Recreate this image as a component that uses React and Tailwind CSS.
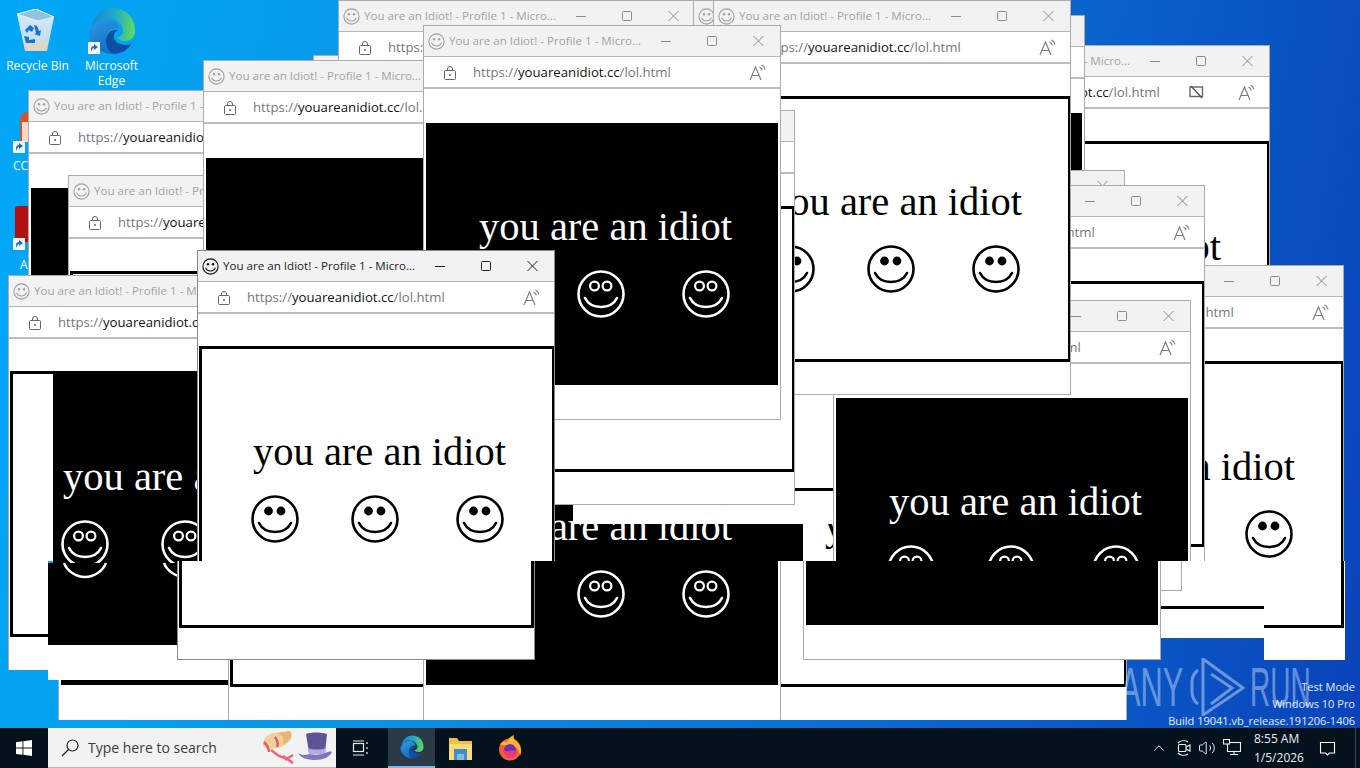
import { ChevronUp, Volume2 } from "lucide-react";

const uiFont = "font-['Open_Sans','Noto_Sans',sans-serif]";

// bottom to top; pos holds the window's place, the clip height where it is cut short
const lowerWindows = [
  { pos: "left-[313px] top-[55px]", clip: "h-[395px]" },
  { pos: "left-[58px] top-[325px]", clip: "h-[395px]", dark: true },
  { pos: "left-[228px] top-[325px]", clip: "h-[395px]" },
  { pos: "left-[769px] top-[325px]", clip: "h-[395px]" },
  { pos: "left-[423px] top-[325px]", clip: "h-[395px]", dark: true },
  { pos: "left-[28px] top-[90px]", clip: "h-[395px]", dark: true },
  { pos: "left-[68px] top-[175px]", clip: "h-[395px]" },
  { pos: "left-[338px] top-0", clip: "h-[395px]" },
  { pos: "left-[203px] top-[60px]", clip: "h-[395px]", dark: true },
  { pos: "left-[8px] top-[275px]", clip: "h-[286px]" },
];

const rightWindows = [
  { pos: "left-[912px] top-[45px]", clip: "h-[395px]", cam: true },
  { pos: "left-[727px] top-[15px]", clip: "h-[395px]", dark: true },
  { pos: "left-[767px] top-[170px]", clip: "h-[60px]" },
  { pos: "left-[986px] top-[265px]", clip: "h-[296px]" },
  { pos: "left-[847px] top-[185px]", clip: "h-[376px]" },
  { pos: "left-[485px] top-[129px]", clip: "h-[376px]" },
  { pos: "left-[833px] top-[300px]", clip: "h-[261px]", dark: true },
  { pos: "left-[693px] top-0", clip: "h-[395px]" },
  { pos: "left-[713px] top-0", clip: "h-[395px]", closed: true },
  { pos: "left-[437px] top-[110px]", clip: "h-[395px]", closed: true },
  { pos: "left-[423px] top-[25px]", clip: "h-[395px]", dark: true, closed: true },
];

function Smiley({ dark, size = 48 }) {
  const ink = dark ? "#fff" : "#000";
  return (
    <svg width={size} height={size} viewBox="0 0 48 48" className="shrink-0">
      <circle cx="24" cy="24" r="22.5" fill="none" stroke={ink} strokeWidth="2.6" />
      {dark ? (
        <>
          <circle cx="17.500" cy="16" r="4.400" fill="none" stroke={ink} strokeWidth="2.200" />
          <circle cx="30" cy="16" r="4.400" fill="none" stroke={ink} strokeWidth="2.200" />
        </>
      ) : (
        <>
          <circle cx="17.500" cy="16" r="4.400" fill={ink} />
          <circle cx="30" cy="16" r="4.400" fill={ink} />
        </>
      )}
      <path d="M8 28c3 6 9 9 16 9s13-3 16-9" fill="none" stroke={ink} strokeWidth="2.6" strokeLinecap="round" />
    </svg>
  );
}

function TitleFace({ active }) {
  const ink = active ? "#111" : "#a0a0a0";
  return (
    <svg width="17" height="17" viewBox="0 0 17 17" className="shrink-0">
      <circle cx="8.5" cy="8.5" r="7.6" fill="none" stroke={ink} strokeWidth="1.1" />
      <circle cx="6" cy="6.2" r="1.2" fill={ink} />
      <circle cx="11" cy="6.2" r="1.2" fill={ink} />
      <path d="M3.6 9.8c1 2.2 2.8 3.2 4.9 3.2s3.9-1 4.9-3.2" fill="none" stroke={ink} strokeWidth="1.1" />
    </svg>
  );
}

function ReadAloud() {
  return (
    <svg width="18" height="17" viewBox="0 0 18 17" className="shrink-0" fill="none" stroke="#7a7a7a" strokeWidth="1.1">
      <path d="M1 16 6.500 3 12 16M3 11.500h7" />
      <path d="M10.500 3c1.500.6 2.400 1.700 2.800 3.400M12.500 1c1.900.8 3 2.300 3.500 4.400" />
    </svg>
  );
}

function CamOff() {
  return (
    <svg width="15" height="14" viewBox="0 0 15 14" className="shrink-0" fill="none" stroke="#666" strokeWidth="1.4">
      <rect x="1" y="2" width="12.500" height="9.500" />
      <path d="M2 1l11 12" stroke="#555" />
    </svg>
  );
}

function BrowserWindow({ pos, clip, dark, active, cam, closed }) {
  const sub = active ? "text-[#222]" : "text-[#a2a2a2]";
  const ctrl = active ? "#222" : "#8a8a8a";
  return (
    <div className={`absolute w-[358px] overflow-hidden border bg-white ${closed ? "" : "border-b-0"} ${pos} ${clip} ${active ? "border-[#888]" : "border-[#ababab]"}`}>
      <div className="flex h-[31px] items-center border-b border-[#b5b5b5] bg-[#f2f2f2] pl-[4px]">
        <TitleFace active={active} />
        <span className={`ml-[4px] w-[205px] truncate whitespace-nowrap text-[11.6px] ${uiFont} ${sub}`}>
          You are an Idiot! - Profile 1 - Micro...
        </span>
        <svg width="120" height="14" viewBox="0 0 120 14" className="ml-[3px] shrink-0" fill="none" stroke={ctrl} strokeWidth="1">
          <path d="M4 7.500h10" />
          <rect x="50.500" y="2.500" width="9" height="9" rx="1" />
          <path d="M96.500 2l10 10M106.500 2l-10 10" />
        </svg>
      </div>
      <div className="flex h-[32px] items-center border-b-2 border-[#bdbdbd] pl-[19px]">
        <svg width="14" height="15" viewBox="0 0 14 15" className="shrink-0" fill="none" stroke="#666" strokeWidth="1">
          <rect x="1.500" y="5.500" width="11" height="9" rx="1" />
          <path d="M4.500 5.500V4a2.500 2.500 0 0 1 5 0v1.500" />
          <circle cx="7" cy="10" r=".6" fill="#666" />
        </svg>
        <span className={`ml-[16px] mt-[2px] w-[276px] whitespace-nowrap text-[13.2px] ${uiFont} text-[#777]`}>
          https://<span className="text-[#111]">youareanidiot.cc</span>/lol.html
        </span>
        {cam ? (
          <div className="-ml-[49px] mr-[34px]">
            <CamOff />
          </div>
        ) : null}
        <ReadAloud />
      </div>
      <div
        className={
          dark
            ? "mt-[32px] h-[266px] w-[356px] border-2 border-white bg-black pl-[53px] pt-[82px] text-white"
            : "ml-[1px] mt-[32px] h-[266px] w-[356px] border-[3px] border-black pl-[51px] pt-[81px] text-black"
        }
      >
        <div className="whitespace-nowrap font-['Liberation_Serif',serif] text-[40.5px] leading-[44px]">you are an idiot</div>
        <div className="-ml-[2px] mt-[21px] flex gap-[52px]">
          <Smiley dark={dark} />
          <Smiley dark={dark} />
          <div className="ml-[5px]">
            <Smiley dark={dark} />
          </div>
        </div>
      </div>
    </div>
  );
}

function ShortcutArrow({ className }) {
  return (
    <svg viewBox="0 0 12 12" className={`absolute h-[12px] w-[12px] ${className}`}>
      <rect width="12" height="12" fill="#f4f4f4" />
      <path d="M3 10V7c0-2 1.500-3 3-3V2l4 3-4 3V6C5 6 4 7 3 10z" fill="#1d6fc4" />
    </svg>
  );
}

function EdgeIcon({ size, id }) {
  return (
    <svg width={size} height={size} viewBox="0 0 48 48" className="shrink-0">
      <defs>
        <linearGradient id={`${id}Top`} x1="0" y1="0.5" x2="1" y2="0.6">
          <stop offset="0" stopColor="#1c86d6" />
          <stop offset="0.5" stopColor="#20a9c8" />
          <stop offset="1" stopColor="#5fdc5c" />
        </linearGradient>
        <linearGradient id={`${id}Mid`} x1="0.2" y1="0" x2="0.6" y2="1">
          <stop offset="0" stopColor="#2a97e0" />
          <stop offset="1" stopColor="#0f6fc4" />
        </linearGradient>
      </defs>
      <path d="M3 22C5 9 14 1 25 1c13 0 22 10 22 23 0 7-5 10-10 10-5 0-8-2-8-4 3 0 6-2 6-6 0-6-6-13-14-13C13 11 6 15 3 22z" fill={`url(#${id}Top)`} />
      <path d="M3 22c3-7 10-10 17-10 6 0 11 4 11 9-6-1-12 3-13 11-.500 6 2 12 7 15C12 47 1 37 1 26c0-2 1-3 2-4z" fill={`url(#${id}Mid)`} />
      <path d="M25 47c-5-3-7.500-9-7-15 1-6 6-10 12-9-3 2-5 5-4 8 1 5 7 7 12 7 3 0 5-1 6-2-4 7-11 11-19 11z" fill="#0e4fa5" />
    </svg>
  );
}

function DesktopIcons() {
  return (
    <>
      <svg width="38" height="44" viewBox="0 0 38 44" className="absolute left-[17px] top-[9px]">
        <defs>
          <linearGradient id="binBody" x1="0" y1="0" x2="0" y2="1">
            <stop offset="0" stopColor="#d8ecf6" />
            <stop offset="0.7" stopColor="#c5dfee" />
            <stop offset="1" stopColor="#ecd2ae" />
          </linearGradient>
        </defs>
        <path d="M0 5 19 0l18 8-7 34H8z" fill="url(#binBody)" />
        <path d="M0 5l19-5 18 8-16 4z" fill="#8fc4e0" stroke="#e4f1f8" />
        <path d="M8 21l5-5 4 3-2 4-3-2-2 3zM17 16l3 1 2 5 2-1-1 6-6-2 2-1zM7 27l5 1v3l6-1v4H9z" fill="#1b74c9" />
      </svg>
      <div className={`absolute left-0 top-[58px] w-[75px] text-center text-[12px] leading-[15px] text-white ${uiFont}`}>Recycle Bin</div>
      <div className="absolute left-[88px] top-[7px]">
        <EdgeIcon size={48} id="deskEdge" />
        <ShortcutArrow className="left-0 top-[35px]" />
      </div>
      <div className={`absolute left-[74px] top-[58px] w-[75px] text-center text-[12px] leading-[15px] text-white ${uiFont}`}>
        Microsoft
        <br />
        Edge
      </div>
      <div className="absolute left-[20px] top-[112px] h-[30px] w-[16px] rounded-t-full bg-[#d8532c]">
        <div className="ml-[2px] mt-[10px] h-[20px] w-[14px] bg-[#f6d9c6]" />
      </div>
      <ShortcutArrow className="left-[13px] top-[141px]" />
      <div className={`absolute left-[13px] top-[158px] text-[12px] leading-[15px] text-white ${uiFont}`}>CC</div>
      <div className="absolute left-[15px] top-[206px] h-[36px] w-[20px] rounded-[3px] bg-[#b3110f]" />
      <ShortcutArrow className="left-[13px] top-[238px]" />
      <div className={`absolute left-[20px] top-[257px] text-[12px] leading-[15px] text-white ${uiFont}`}>A</div>
    </>
  );
}

function GhostPage() {
  return (
    <>
      {/* repaint leftovers on the left window */}
      <div className="absolute left-[8px] top-[561px] h-[109px] w-[40px] border-l border-[#ababab] bg-white pl-px">
        <div className="h-[76px] w-[60px] border-b-[3px] border-l-[3px] border-black" />
      </div>
      <div className="absolute left-[53px] top-[373px] h-[190px] w-[144px] overflow-hidden bg-black pl-[10px] pt-[82px] text-white">
        <div className="whitespace-nowrap font-['Liberation_Serif',serif] text-[40.5px] leading-[44px]">you are an idiot</div>
        <div className="-ml-[2px] mt-[21px] flex gap-[52px]">
          <Smiley dark />
          <Smiley dark />
        </div>
      </div>
      <div className="absolute left-[48px] top-[563px] h-[82px] w-[180px] bg-black" />
      <div className="absolute left-[48px] top-[645px] h-[35px] w-[180px] bg-white" />
      <svg width="150" height="18" viewBox="0 0 150 18" className="absolute left-[60px] top-[562px]" fill="none" stroke="#fff" strokeWidth="2.4">
        <path d="M4 1c3 8 12 14 21 14s18-6 21-14" />
        <path d="M104 1c3 8 12 14 21 14 8 0 12-3 15-6" />
      </svg>
    </>
  );
}

function MiddleScraps() {
  return (
    <>
      <div className="absolute left-[573px] top-[505px] h-[19px] w-[260px] bg-white" />
      <div className="absolute left-[778px] top-[524px] h-[37px] w-[25px] bg-black" />
      {/* stale bottom of the front black window */}
      <div className="absolute left-[803px] top-[561px] h-[99px] w-[358px] border border-t-0 border-[#a8a8a8] bg-white pl-[2px]">
        <div className="h-[64px] w-[352px] bg-black" />
      </div>
      {/* stale bottoms on the right */}
      <div className="absolute left-[1161px] top-[561px] h-[77px] w-[103px] bg-white pt-[45px]">
        <div className="h-[3px] w-full bg-black" />
      </div>
      <div className="absolute left-[1161px] top-[561px] h-[30px] w-[21px] border-b border-r border-[#a8a8a8] bg-white" />
      <div className="absolute left-[1264px] top-[561px] h-[99px] w-[81px] bg-white">
        <div className="h-[67px] w-[80px] border-b-[3px] border-r-[3px] border-black" />
      </div>
    </>
  );
}

function Watermark() {
  return (
    <div className="pointer-events-none absolute left-[1120px] top-[658px] flex h-[58px] items-center font-['Liberation_Sans',sans-serif] text-[56px] leading-none text-white/40">
      <span className="w-[70px] origin-left scale-x-[.55] whitespace-nowrap">ANY</span>
      <svg width="58" height="58" viewBox="0 0 58 58" fill="none" stroke="#fff" strokeOpacity="0.4" strokeWidth="3">
        <path d="M8 12c-4 3-6 7-6 12v10c0 5 2 9 6 12" />
        <path d="M13 1v56l40-27L13 1z" />
        <path d="M21 16 42 30 21 46" />
      </svg>
      <span className="ml-[2px] w-[64px] origin-left scale-x-[.5] whitespace-nowrap">RUN</span>
    </div>
  );
}

function SearchHats() {
  return (
    <svg width="80" height="40" viewBox="0 0 80 40" className="shrink-0">
      <path d="M8 17C8 9 14 5 21 5c5-1 10-1 14-2 2 3 2 7-1 10-3 4-7 6-12 7-6 1-13 1-14-3z" fill="#f1d09a" />
      <path d="M21 5c5-1 10-1 14-2 2 3 2 7-1 10-3 2-5 3-7 3 3-4 2-9-6-11z" fill="#e6b473" />
      <path d="M9 14c3 3 5 7 5 10M20 9c3 4 3 8 2 10" fill="none" stroke="#e35d72" strokeWidth="2.500" />
      <path d="M16 22l8 6 6 2M28 28l10 7M38 27l-8 5" fill="none" stroke="#e8657c" strokeWidth="2.500" />
      <path d="M51 6c6-2 14-2 21 0l-2 19H54z" fill="#5c5595" />
      <path d="M53 20c5 2 12 2 18 0l-1 6H54z" fill="#b4abe2" />
      <path d="M43 25c5 3 8 2 11 1 6 1 12 1 16-1 3-1 5-2 7-1-2 5-9 8-17 8s-14-2-17-7z" fill="#8076bb" />
    </svg>
  );
}

function Taskbar() {
  return (
    <div className="flex h-[40px] shrink-0 items-center bg-[#04121e] text-white">
      <div className="flex h-full w-[48px] items-center justify-center">
        <svg width="16" height="16" viewBox="0 0 16 16" fill="#fff">
          <path d="M0 2.200 6.500 1.300v6.300H0zM7.400 1.200 16 0v7.600H7.400zM0 8.500h6.500v6.300L0 13.900zM7.400 8.500H16V16l-8.600-1.200z" />
        </svg>
      </div>
      <div className="flex h-full w-[288px] items-center overflow-hidden border-b border-[#b9b9b9] bg-[#f2f2f2] pl-[12px]">
        <svg width="20" height="20" viewBox="0 0 20 20" fill="none" stroke="#222" strokeWidth="1.2" className="shrink-0">
          <circle cx="12.500" cy="7.500" r="5.500" />
          <path d="M8.500 11.500 2 18" />
        </svg>
        <span className={`ml-[8px] w-[167px] whitespace-nowrap text-[14px] text-[#3c3c3c] ${uiFont}`}>Type here to search</span>
        <SearchHats />
      </div>
      <div className="flex h-full w-[48px] items-center justify-center">
        <svg width="17" height="16" viewBox="0 0 17 16" fill="none" stroke="#e8e8e8" strokeWidth="1.200">
          <rect x="1.500" y="3.500" width="10" height="8" />
          <path d="M1 1h11M1 15h11M15 2v2M15 7v2M15 12v2" />
        </svg>
      </div>
      <div className="ml-[4px] flex h-full w-[47px] items-center justify-center border-b-2 border-[#76b9ed] bg-[#2b3a46]">
        <EdgeIcon size={24} id="barEdge" />
      </div>
      <div className="flex h-full w-[50px] items-center justify-center">
        <svg width="23" height="23" viewBox="0 0 23 23">
          <path d="M0 1h8l2 3h13v19H0z" fill="#f0c043" />
          <path d="M0 7h23v16H0z" fill="#fbdc72" />
          <path d="M5 12h13v11h-3v-6H8v6H5z" fill="#3b8fd1" />
          <path d="M8 17h7v6H8z" fill="#7cc0ea" />
        </svg>
      </div>
      <div className="flex h-full w-[50px] items-center justify-center">
        <svg width="24" height="26" viewBox="0 0 24 26">
          <circle cx="12" cy="14.500" r="11" fill="#f5612a" />
          <path d="M2 9c3-3 5-3 7-2 1-3 4-6 7-7-1 3 0 4 3 7 4 4 5 9 3 14-1-9-7-12-12-10-4-1-6 0-8-2z" fill="#ffb52f" />
          <circle cx="12" cy="15" r="6" fill="#6f2cc0" />
          <path d="M5 14c2 2 4 3 7 2 3-1 5 0 7 1-1 4-4 6-7 6-4 0-6-4-7-9z" fill="#e33a7a" />
        </svg>
      </div>
      <div className="ml-auto flex h-full items-center">
        <ChevronUp size={18} strokeWidth={1.2} className="mr-[6px]" />
        <svg width="20" height="20" viewBox="0 0 20 20" fill="none" stroke="#eee" strokeWidth="1.100" className="mr-[4px]">
          <path d="M4 5a8 8 0 0 1 10-1M4 15a8 8 0 0 0 10 1" />
          <rect x="4.500" y="6.500" width="7.500" height="7" rx="1" />
          <path d="M12 9l4-2v6l-4-2" />
        </svg>
        <Volume2 size={18} strokeWidth={1.2} className="mr-[7px]" />
        <svg width="18" height="18" viewBox="0 0 18 18" fill="none" stroke="#eee" strokeWidth="1.100" className="mr-[13px]">
          <rect x="4.500" y="3.500" width="13" height="9" />
          <path d="M11 12.500v3M7 15.500h8" />
          <rect x="0.500" y="0.500" width="6" height="4.500" fill="#04121e" />
        </svg>
        <div className={`w-[62px] text-[12px] leading-[19px] text-[#eee] ${uiFont}`}>
          8:55 AM
          <br />
          1/5/2026
        </div>
        <svg width="17" height="17" viewBox="0 0 17 17" fill="none" stroke="#fff" strokeWidth="1.100" className="ml-[3px] mr-[19px]">
          <path d="M1.500 2.500h14v10.500h-5l-2 2-2-2h-5z" />
        </svg>
        <div className="mr-[4px] h-full w-px bg-[#3a4854]" />
      </div>
    </div>
  );
}

export default function App() {
  return (
    <div className="relative flex h-[768px] w-[1360px] flex-col overflow-hidden">
      <div className="relative flex-1 bg-[linear-gradient(100deg,#00a8f6_0%,#0a97e6_30%,#0a62cd_75%,#0a43bb_100%)]">
        <DesktopIcons />
        {lowerWindows.map((w) => (
          <BrowserWindow key={w.pos} {...w} />
        ))}
        <GhostPage />
        {rightWindows.map((w) => (
          <BrowserWindow key={w.pos} {...w} />
        ))}
        <MiddleScraps />
        {/* stale bottom of the focused window */}
        <div className="absolute left-[177px] top-[561px] h-[99px] w-[358px] border border-t-0 border-[#8a8a8a] bg-white pl-px">
          <div className="h-[67px] w-[355px] border-x-[3px] border-b-[3px] border-black" />
        </div>
        <BrowserWindow pos="left-[197px] top-[250px]" clip="h-[311px]" active />
        <Watermark />
        <div className="absolute right-[5px] top-[678px] text-right text-[11px] leading-[17px] text-white/90 font-['Open_Sans',sans-serif]">
          Test Mode
          <br />
          Windows 10 Pro
          <br />
          Build 19041.vb_release.191206-1406
        </div>
      </div>
      <Taskbar />
    </div>
  );
}
